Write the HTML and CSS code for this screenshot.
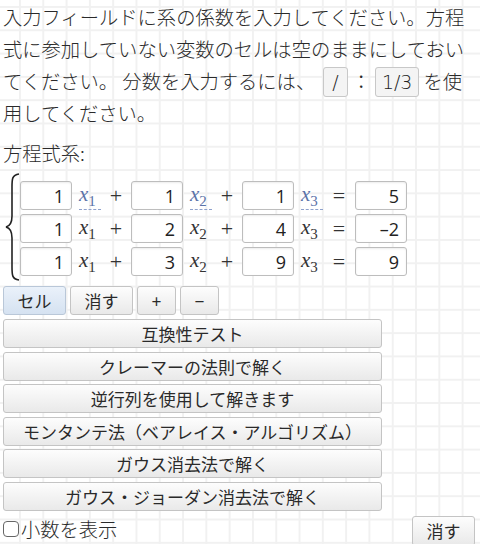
FILE: index.html
```html
<!DOCTYPE html>
<html lang="ja">
<head>
    <meta charset="UTF-8">
    <meta name="viewport" content="width=device-width, initial-scale=1.0">
    <title>連立方程式</title>
    <link rel="stylesheet" href="styles.css">
</head>
<body>

    <p class="intro">入力フィールドに系の係数を入力してください。方程式に参加していない変数のセルは空のままにしておいてください。 分数を入力するには、<span class="code slash">/</span>：<span class="code">1/3</span>を使用してください。</p>

    <div class="title">方程式系:</div>

    <div class="system">
        <svg class="brace" width="16" height="108" viewBox="0 0 16 108">
            <path d="M14 1 C7 2 7 6 7 14 L7 43 C7 50 5 53 1 54 C5 55 7 58 7 65 L7 94 C7 102 7 106 14 107" fill="none" stroke="#222" stroke-width="1.6"/>
        </svg>
        <div class="rows">
            <div class="row first">
                <input class="cell" value="1"><span class="var">x<sub>1</sub></span><span class="op">+</span>
                <input class="cell" value="1"><span class="var">x<sub>2</sub></span><span class="op">+</span>
                <input class="cell" value="1"><span class="var">x<sub>3</sub></span><span class="op eq">=</span>
                <input class="cell" value="5">
            </div>
            <div class="row">
                <input class="cell" value="1"><span class="var">x<sub>1</sub></span><span class="op">+</span>
                <input class="cell" value="2"><span class="var">x<sub>2</sub></span><span class="op">+</span>
                <input class="cell" value="4"><span class="var">x<sub>3</sub></span><span class="op eq">=</span>
                <input class="cell" value="–2">
            </div>
            <div class="row">
                <input class="cell" value="1"><span class="var">x<sub>1</sub></span><span class="op">+</span>
                <input class="cell" value="3"><span class="var">x<sub>2</sub></span><span class="op">+</span>
                <input class="cell" value="9"><span class="var">x<sub>3</sub></span><span class="op eq">=</span>
                <input class="cell" value="9">
            </div>
        </div>
    </div>

    <div class="tools">
        <button class="btn active w-wide">セル</button>
        <button class="btn w-wide">消す</button>
        <button class="btn w-small">+</button>
        <button class="btn w-small">−</button>
    </div>

    <div class="methods">
        <button class="btn method">互換性テスト</button>
        <button class="btn method">クレーマーの法則で解く</button>
        <button class="btn method">逆行列を使用して解きます</button>
        <button class="btn method">モンタンテ法（ベアレイス・アルゴリズム）</button>
        <button class="btn method">ガウス消去法で解く</button>
        <button class="btn method">ガウス・ジョーダン消去法で解く</button>
    </div>

    <div class="footer">
        <label class="decimal"><span class="check"></span>小数を表示</label>
        <button class="btn clear">消す</button>
    </div>

</body>
</html>
```

FILE: styles.css
```css
body {
    margin: 0;
    padding: 1px 3px 0 3px;
    font-family: "Noto Sans CJK JP", sans-serif;
    color: #2a2a2a;
    background-color: #fff;
    background-image:
        linear-gradient(to right, #f1f1f1 2px, transparent 2px),
        linear-gradient(to bottom, #f1f1f1 2px, transparent 2px);
    background-size: 23.3px 23.3px;
    background-position: 19px 6px;
    height: 544px;
    overflow: hidden;
    box-sizing: border-box;
}

.intro {
    margin: 0;
    font-size: 19.3px;
    line-height: 32px;
    font-weight: 300;
}

.code {
    font-family: "DejaVu Sans", sans-serif;
    font-size: 19px;
    line-height: 22px;
    padding: 3px 6px;
    margin: 0 4px;
    background: #f4f4f4;
    border: 1px solid #c8c8c8;
    border-radius: 3px;
    color: #222;
}

.code.slash {
    padding: 3px 8px;
    margin-left: 8px;
}

.title {
    margin-top: 8px;
    font-size: 19.3px;
    line-height: 32px;
    font-weight: 300;
}

.system {
    display: flex;
    align-items: flex-start;
    margin-top: 4px;
}

.brace {
    margin-left: 2px;
    margin-right: -1px;
}

.rows {
    display: flex;
    flex-direction: column;
    gap: 4px;
    margin-top: 8px;
}

.row {
    display: flex;
    align-items: center;
    height: 29px;
}

.cell {
    width: 52px;
    height: 29px;
    box-sizing: border-box;
    border: 1px solid #bdbdbd;
    border-radius: 3px;
    box-shadow: inset 0 1px 2px rgba(0, 0, 0, 0.08);
    background: #fff;
    text-align: right;
    padding: 0 7px 0 0;
    font-family: "Open Sans", sans-serif;
    font-size: 18px;
    color: #222;
    margin: 0;
}

.var {
    display: block;
    width: 22px;
    margin-left: 7px;
    height: 24px;
    line-height: 20px;
    box-sizing: border-box;
    font-family: "Liberation Serif", serif;
    font-style: italic;
    font-size: 21px;
    color: #333;
    white-space: nowrap;
}

.var sub {
    font-style: normal;
    font-size: 15px;
    vertical-align: -5px;
    line-height: 0;
}

.first .var {
    color: #5b73a8;
    height: 27px;
    padding-top: 1px;
    margin-top: 1px;
    border-bottom: 1px dashed #8ea1cc;
}

.op {
    width: 30px;
    text-align: center;
    font-family: "Liberation Serif", serif;
    font-size: 22px;
    color: #333;
}

.op.eq {
    width: 32px;
}

.tools {
    display: flex;
    gap: 4px;
    margin-top: 5px;
}

.btn {
    font-family: "Noto Sans CJK JP", sans-serif;
    font-size: 17px;
    color: #2a2a2a;
    background: linear-gradient(#fdfdfd, #e9e9e9);
    border: 1px solid #c4c4c4;
    border-radius: 3px;
    box-sizing: border-box;
    padding: 0;
    margin: 0;
    cursor: pointer;
}

.btn.active {
    background: linear-gradient(#eaf1fa, #d5e2f1);
    border-color: #b9c7d8;
}

.w-wide {
    width: 63px;
    height: 29px;
}

.w-small {
    width: 39px;
    height: 29px;
}

.methods {
    display: flex;
    flex-direction: column;
    gap: 3.5px;
    margin-top: 4px;
    width: 379px;
}

.method {
    height: 29px;
    line-height: 27px;
}

.footer {
    display: flex;
    justify-content: space-between;
    align-items: flex-start;
    margin-top: 4px;
    padding-right: 2px;
}

.decimal {
    display: flex;
    align-items: center;
    font-size: 19.3px;
    font-weight: 300;
    line-height: 26px;
    margin-top: 1px;
}

.check {
    width: 16px;
    height: 16px;
    box-sizing: border-box;
    border: 1.5px solid #666;
    border-radius: 4px;
    background: #fff;
    margin-right: 2px;
}

.clear {
    width: 63px;
    height: 30px;
    margin-top: 1px;
}
```
